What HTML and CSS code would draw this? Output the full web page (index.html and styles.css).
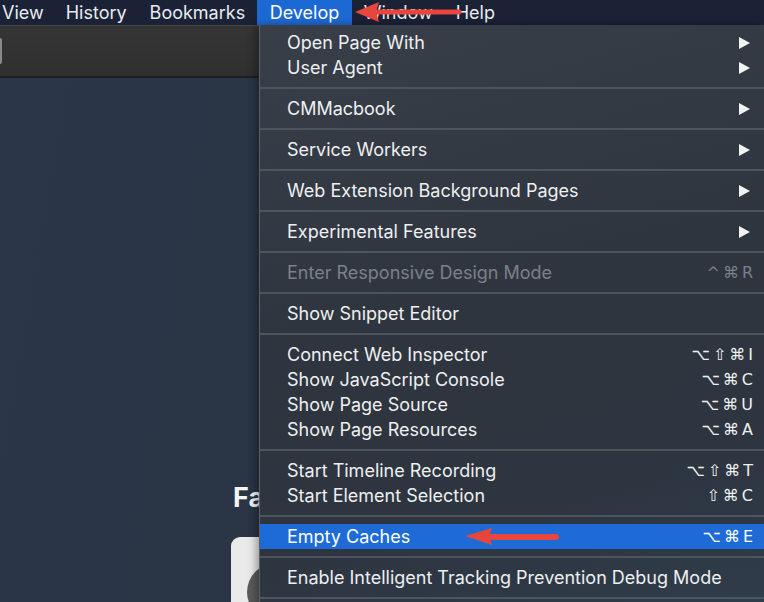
FILE: index.html
```html
<!DOCTYPE html>
<html lang="en">
<head>
    <meta charset="UTF-8">
    <title>Develop menu</title>
    <link rel="stylesheet" href="styles.css">
</head>
<body>
    <div class="screen">
        <!-- top menu bar -->
        <div class="menubar">
            <span class="mb-item">View</span>
            <span class="mb-item">History</span>
            <span class="mb-item">Bookmarks</span>
            <span class="mb-item active">Develop</span>
            <span class="mb-item">Window</span>
            <span class="mb-item">Help</span>
        </div>

        <div class="toolbar">
            <span class="tb-edge"></span>
        </div>

        <!-- start page, mostly hidden by the menu -->
        <div class="content">
            <h2 class="fav-title">Fa</h2>
            <div class="fav-card">
                <span class="fav-icon"></span>
            </div>
        </div>

        <!-- Develop dropdown -->
        <div class="dropdown">
            <div class="item">Open Page With<span class="sub"></span></div>
            <div class="item">User Agent<span class="sub"></span></div>
            <div class="sep"></div>
            <div class="item">CMMacbook<span class="sub"></span></div>
            <div class="sep"></div>
            <div class="item">Service Workers<span class="sub"></span></div>
            <div class="sep"></div>
            <div class="item">Web Extension Background Pages<span class="sub"></span></div>
            <div class="sep"></div>
            <div class="item">Experimental Features<span class="sub"></span></div>
            <div class="sep"></div>
            <div class="item disabled">Enter Responsive Design Mode<span class="key">^⌘R</span></div>
            <div class="sep"></div>
            <div class="item">Show Snippet Editor</div>
            <div class="sep"></div>
            <div class="item">Connect Web Inspector<span class="key">⌥⇧⌘I</span></div>
            <div class="item">Show JavaScript Console<span class="key">⌥⌘C</span></div>
            <div class="item">Show Page Source<span class="key">⌥⌘U</span></div>
            <div class="item">Show Page Resources<span class="key">⌥⌘A</span></div>
            <div class="sep"></div>
            <div class="item">Start Timeline Recording<span class="key">⌥⇧⌘T</span></div>
            <div class="item">Start Element Selection<span class="key">⇧⌘C</span></div>
            <div class="sep"></div>
            <div class="item selected">Empty Caches<span class="key">⌥⌘E</span></div>
            <div class="sep"></div>
            <div class="item">Enable Intelligent Tracking Prevention Debug Mode</div>
            <div class="sep"></div>
        </div>

        <!-- red annotation arrows -->
        <svg class="callout callout-top" width="120" height="24" viewBox="0 0 120 24">
            <line x1="22" y1="12" x2="104" y2="12" stroke="#e8453c" stroke-width="5" stroke-linecap="round"/>
            <polygon points="0,12 24,2 21,12 24,22" fill="#e8453c"/>
        </svg>
        <svg class="callout callout-bottom" width="100" height="24" viewBox="0 0 100 24">
            <line x1="24" y1="12" x2="91" y2="12" stroke="#e8453c" stroke-width="6" stroke-linecap="round"/>
            <polygon points="0,11 27,3 24,11 27,20" fill="#e8453c"/>
        </svg>
    </div>
</body>
</html>
```

FILE: styles.css
```css
/* page frame */
body {
    margin: 0;
    font-family: Inter, "Liberation Sans", sans-serif;
}

.screen {
    position: relative;
    width: 764px;
    height: 602px;
    overflow: hidden;
    background: linear-gradient(100deg, #2b3648 0%, #2a3444 60%, #283241 100%);
    display: flex;
    flex-direction: column;
}

/* top menu bar */
.menubar {
    height: 25px;
    flex: none;
    background: #1b2236;
    display: flex;
    align-items: stretch;
    color: #e9ebf0;
    font-size: 18px;
}

.mb-item {
    padding: 0 11.5px;
    line-height: 25px;
}

.mb-item:first-child {
    padding: 0 10.5px 0 2px;
}

.mb-item.active {
    background: #1d69d4;
    color: #fff;
    padding: 0 13px;
}

/* browser toolbar */
.toolbar {
    height: 50px;
    flex: none;
    background: linear-gradient(#353535, #2f2f2f);
    border-top: 1px solid #474747;
    border-bottom: 2px solid #1d1f22;
    display: flex;
    align-items: center;
}

.tb-edge {
    width: 2px;
    height: 26px;
    background: #8a8a8a;
    border-radius: 0 2px 2px 0;
}

/* start page behind the menu */
.content {
    padding: 405px 0 0 233px;
    display: flex;
    flex-direction: column;
    align-items: flex-start;
}

.fav-title {
    margin: 0;
    font-size: 27px;
    line-height: 30px;
    font-weight: bold;
    color: #f4f5f7;
}

.fav-card {
    margin-top: 24px;
    margin-left: -2px;
    width: 90px;
    height: 80px;
    border-radius: 9px;
    background: #eaeaea;
    position: relative;
}

.fav-icon {
    position: absolute;
    left: 16px;
    top: 26px;
    width: 58px;
    height: 58px;
    border-radius: 50%;
    background: #5b5b5b;
}

/* Develop dropdown */
.dropdown {
    position: absolute;
    left: 259px;
    top: 25px;
    right: 0;
    bottom: -20px;
    padding-top: 5px;
    background: linear-gradient(165deg, #383f49 0%, #2f353e 45%, #2d3540 75%, #2f3d4b 100%);
    border-left: 1px solid #5b5f66;
    box-shadow: -3px 0 8px rgba(0, 0, 0, 0.35);
    color: #eeeff1;
    font-size: 18px;
}

.item {
    height: 25px;
    line-height: 25px;
    padding: 0 11px 0 27px;
    display: flex;
    align-items: center;
    justify-content: space-between;
}

.item.disabled {
    color: #7c8088;
}

.item.selected {
    background: #1e6bd8;
    color: #fff;
}

.key {
    font-family: "DejaVu Sans", sans-serif;
    font-size: 16px;
    letter-spacing: 3px;
    margin-right: -3px;
}

.sub {
    width: 0;
    height: 0;
    margin-right: 3px;
    border-top: 6px solid transparent;
    border-bottom: 6px solid transparent;
    border-left: 11px solid #f2f2f2;
}

.sep {
    height: 16px;
    display: flex;
    align-items: center;
}

.sep::before {
    content: "";
    flex: 1;
    height: 2px;
    background: #4e545c;
}

/* annotation arrows */
.callout {
    position: absolute;
}

.callout-top {
    left: 355px;
    top: 0;
}

.callout-bottom {
    left: 465px;
    top: 525px;
}
```
